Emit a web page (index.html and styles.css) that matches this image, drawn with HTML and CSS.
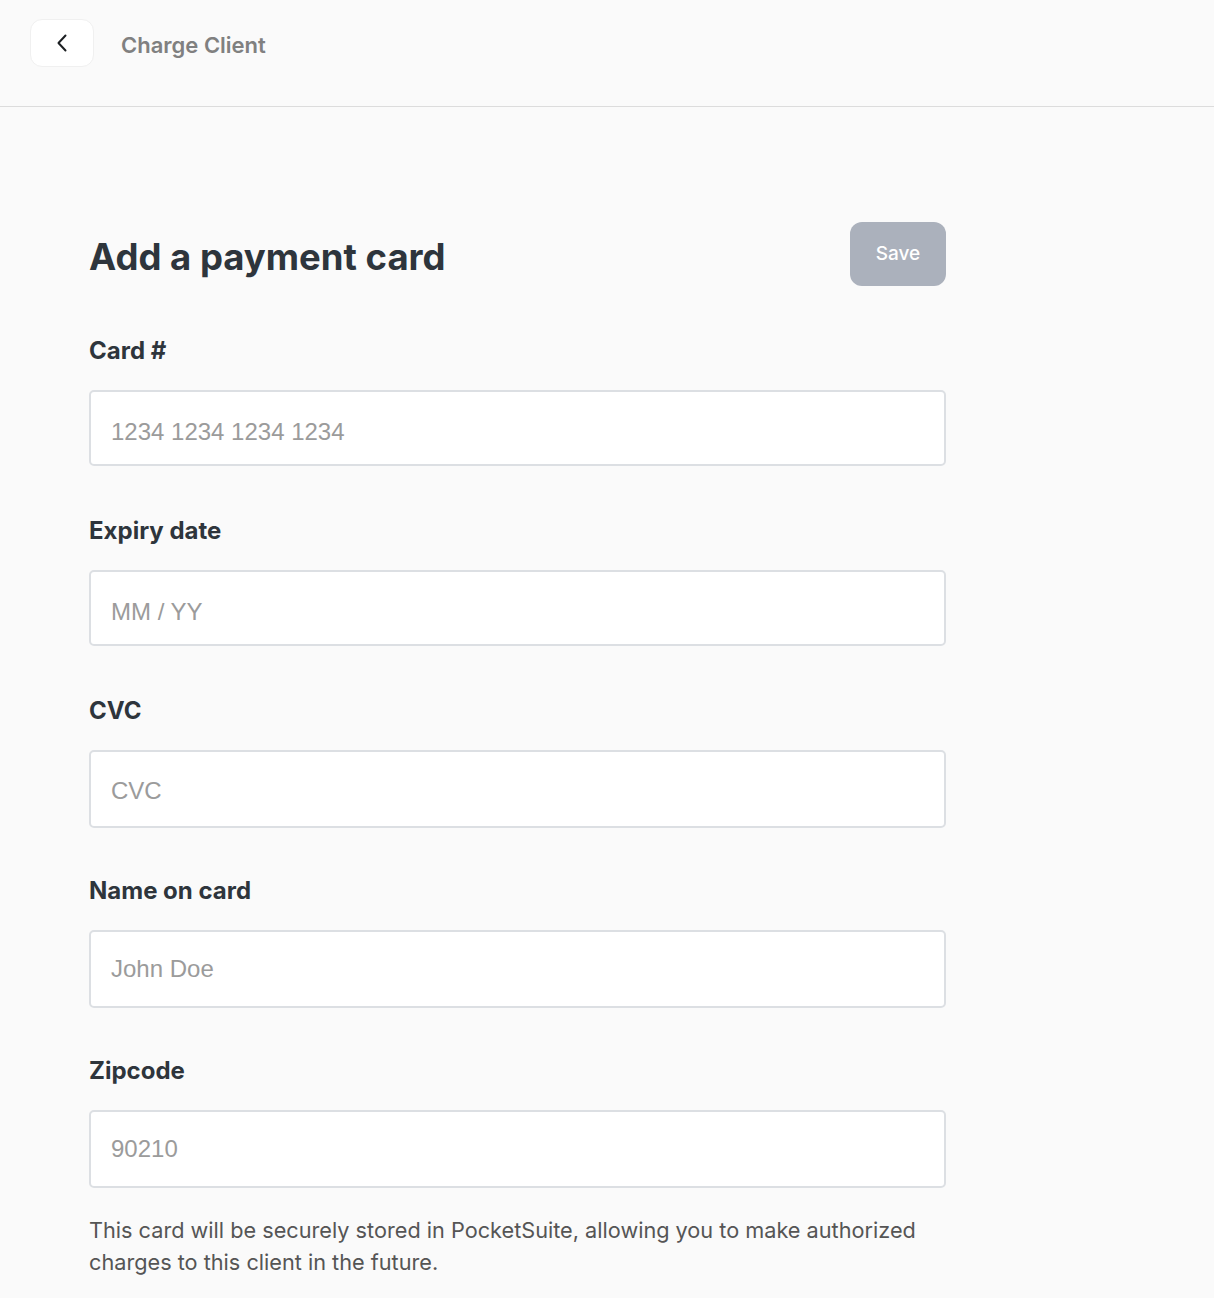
FILE: index.html
```html
<!DOCTYPE html>
<html lang="en">
<head>
    <meta charset="UTF-8">
    <meta name="viewport" content="width=device-width, initial-scale=1.0">
    <title>Charge Client</title>
    <link rel="stylesheet" href="styles.css">
</head>
<body>
    <header class="topbar">
        <button class="back-button" aria-label="Back">
            <svg width="12" height="18" viewBox="0 0 12 18" fill="none">
                <path d="M9.5 1.5L2.5 9l7 7.5" stroke="#1c1f22" stroke-width="2" stroke-linecap="round" stroke-linejoin="round"/>
            </svg>
        </button>
        <span class="topbar-title">Charge Client</span>
    </header>

    <main class="content">
        <div class="title-row">
            <h1>Add a payment card</h1>
            <button class="save-button">Save</button>
        </div>

        <div class="field">
            <label for="cardNumber">Card #</label>
            <input type="text" id="cardNumber" class="card-input" placeholder="1234 1234 1234 1234">
        </div>

        <div class="field">
            <label for="expiry">Expiry date</label>
            <input type="text" id="expiry" class="card-input" placeholder="MM / YY">
        </div>

        <div class="field field-tall">
            <label for="cvc">CVC</label>
            <input type="text" id="cvc" class="cvc-input" placeholder="CVC">
        </div>

        <div class="field field-tall">
            <label for="name">Name on card</label>
            <input type="text" id="name" placeholder="John Doe">
        </div>

        <div class="field field-tall">
            <label for="zip">Zipcode</label>
            <input type="text" id="zip" placeholder="90210">
        </div>

        <p class="note">This card will be securely stored in PocketSuite, allowing you to make authorized charges to this client in the future.</p>
    </main>
</body>
</html>
```

FILE: styles.css
```css
body {
    margin: 0;
    font-family: Inter, "Noto Sans", sans-serif;
    background-color: #fafafa;
    color: #2e353c;
}
.topbar {
    display: flex;
    align-items: center;
    gap: 27px;
    height: 48px;
    padding: 19px 30px 39px;
    border-bottom: 1px solid #dcdcdc;
}
.back-button {
    display: flex;
    align-items: center;
    justify-content: center;
    width: 64px;
    height: 48px;
    background-color: #fff;
    border: 1px solid #f0f0f0;
    border-radius: 12px;
    padding: 0;
    cursor: pointer;
}
.topbar-title {
    font-size: 22px;
    font-weight: 600;
    color: #808080;
    padding-top: 3px;
}
.content {
    width: 857px;
    padding: 115px 0 0 89px;
}
.title-row {
    display: flex;
    align-items: center;
    justify-content: space-between;
    margin-bottom: 49px;
}
h1 {
    margin: 0;
    padding-top: 5px;
    font-size: 36.5px;
    font-weight: 700;
    color: #2e353c;
}
.save-button {
    width: 96px;
    height: 64px;
    border: none;
    border-radius: 12px;
    background-color: #abb1bc;
    color: #fff;
    font-family: Inter, sans-serif;
    font-size: 19px;
    font-weight: 500;
    padding-bottom: 2px;
}
.field {
    display: flex;
    flex-direction: column;
    margin-bottom: 49px;
}
.field label {
    font-size: 24px;
    font-weight: 700;
    line-height: 30px;
    margin-top: 1px;
    margin-bottom: 24px;
}
.field input {
    height: 76px;
    box-sizing: border-box;
    padding: 0 20px;
    background-color: #fff;
    border: 2px solid #dcdfe3;
    border-radius: 5px;
    font-family: "Liberation Sans", Arial, sans-serif;
    font-size: 24px;
    color: #333;
    outline: none;
}
.field-tall {
    margin-bottom: 47px;
}
.field-tall input {
    height: 78px;
}
.field input.card-input {
    padding-top: 8px;
}
.field input.cvc-input {
    padding-top: 4px;
}
.field input::placeholder {
    color: #9b9b9b;
}
.field:last-of-type {
    margin-bottom: 26px;
}
.note {
    margin: 0;
    font-size: 21.7px;
    line-height: 32px;
    color: #555;
}
```
